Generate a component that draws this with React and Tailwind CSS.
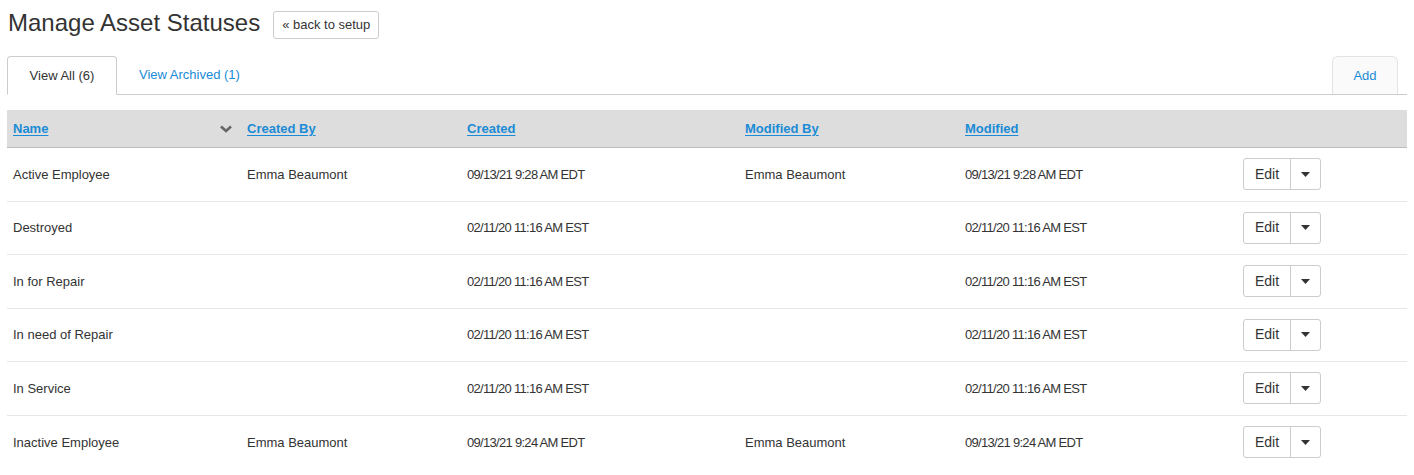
import React from 'react';

const rows = [
  { name: 'Active Employee', createdBy: 'Emma Beaumont', created: '09/13/21 9:28 AM EDT', modifiedBy: 'Emma Beaumont', modified: '09/13/21 9:28 AM EDT' },
  { name: 'Destroyed', createdBy: '', created: '02/11/20 11:16 AM EST', modifiedBy: '', modified: '02/11/20 11:16 AM EST' },
  { name: 'In for Repair', createdBy: '', created: '02/11/20 11:16 AM EST', modifiedBy: '', modified: '02/11/20 11:16 AM EST' },
  { name: 'In need of Repair', createdBy: '', created: '02/11/20 11:16 AM EST', modifiedBy: '', modified: '02/11/20 11:16 AM EST' },
  { name: 'In Service', createdBy: '', created: '02/11/20 11:16 AM EST', modifiedBy: '', modified: '02/11/20 11:16 AM EST' },
  { name: 'Inactive Employee', createdBy: 'Emma Beaumont', created: '09/13/21 9:24 AM EDT', modifiedBy: 'Emma Beaumont', modified: '09/13/21 9:24 AM EDT' },
];

const cols = 'grid grid-cols-[234px_220px_278px_220px_278px_1fr]';

const Caret = ({ className }) => (
  <svg width="9" height="5" viewBox="0 0 9 5" className={className}>
    <path d="M0 0h9L4.5 5z" fill="currentColor" />
  </svg>
);

export default function App() {
  return (
    <div className="px-[7px] pt-[7px] text-[13px] text-[#333] font-['Liberation_Sans',Arial,sans-serif] bg-white">
      <div className="flex items-center gap-[13px]">
        <h1 className="text-[24px] leading-[28px] text-[#333] pl-[1px]">Manage Asset Statuses</h1>
        <button className="h-[28px] px-[8px] border border-[#ccc] rounded-[3px] text-[13px] text-[#333] bg-white mt-[4px]">
          « back to setup
        </button>
      </div>

      <div className="mt-[17px] flex items-end border-b border-[#ccc] h-[39px]">
        <div className="relative -mb-px h-[39px] w-[110px] flex items-center justify-center border border-[#ccc] border-b-white rounded-t-[4px] bg-white">
          View All (6)
        </div>
        <div className="h-[38px] px-[22px] flex items-center text-[#1a8bd6]">View Archived (1)</div>
        <div className="ml-auto mr-[9px] h-[38px] w-[66px] flex items-center justify-center border border-b-0 border-[#e3e3e3] rounded-t-[6px] bg-[#fafafa] text-[#1a8bd6]">
          Add
        </div>
      </div>

      <div className="mt-[15px]">
        <div className={`${cols} h-[38px] items-center bg-[#dddddd] border-b border-[#bbb] font-bold`}>
          <div className="px-[6px] flex items-center justify-between">
            <span className="text-[#1a8bd6] underline underline-offset-2">Name</span>
            <svg width="12" height="8" viewBox="0 0 12 8" className="mr-[3px] mt-[1px]">
              <path d="M1 1.5l5 4.5 5-4.5" fill="none" stroke="#666" strokeWidth="2.6" />
            </svg>
          </div>
          <div className="px-[6px] text-[#1a8bd6] underline underline-offset-2">Created By</div>
          <div className="px-[6px] text-[#1a8bd6] underline underline-offset-2">Created</div>
          <div className="px-[6px] text-[#1a8bd6] underline underline-offset-2">Modified By</div>
          <div className="px-[6px] text-[#1a8bd6] underline underline-offset-2">Modified</div>
          <div />
        </div>
        {rows.map((r, i) => (
          <div
            key={r.name}
            className={`${cols} h-[53.5px] items-center ${i < rows.length - 1 ? 'border-b border-[#e6e6e6]' : ''}`}
          >
            <div className="px-[6px]">{r.name}</div>
            <div className="px-[6px]">{r.createdBy}</div>
            <div className="px-[6px] tracking-[-0.7px]">{r.created}</div>
            <div className="px-[6px]">{r.modifiedBy}</div>
            <div className="px-[6px] tracking-[-0.7px]">{r.modified}</div>
            <div className="px-[6px]">
              <div className="inline-flex h-[32px] border border-[#ccc] rounded-[3px] bg-white">
                <span className="w-[47px] flex items-center justify-center border-r border-[#ccc] text-[14px]">Edit</span>
                <span className="w-[29px] flex items-center justify-center text-[#333]">
                  <Caret />
                </span>
              </div>
            </div>
          </div>
        ))}
      </div>
    </div>
  );
}
